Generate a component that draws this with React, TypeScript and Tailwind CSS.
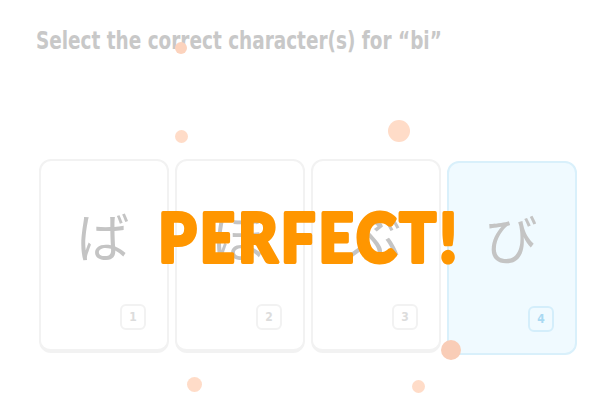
import React from "react";

const choices = [
  { kana: "ば", n: 1 },
  { kana: "ぼ", n: 2 },
  { kana: "ぶ", n: 3 },
  { kana: "び", n: 4, selected: true },
];

const dots = [
  { x: 181, y: 48, d: 12, c: "bg-[#fcd3bd]" },
  { x: 181, y: 136, d: 13, c: "bg-[#ffdcc8]" },
  { x: 399, y: 131, d: 22, c: "bg-[#ffdcc8]" },
  { x: 451, y: 350, d: 20, c: "bg-[#f9cdb7]" },
  { x: 194, y: 384, d: 15, c: "bg-[#ffdcc8]" },
  { x: 418, y: 386, d: 13, c: "bg-[#ffdcc8]" },
];

const App = () => {
  return (
    <div className="relative w-[606px] h-[419px] overflow-hidden bg-white">
      <div className="flex flex-col pt-[25px] pl-[39px]">
        <h1
          className="text-[25px] font-bold text-[#c8c8c8] -ml-[3px] leading-[32px] whitespace-nowrap origin-left scale-x-[0.82]"
          style={{ fontFamily: '"DejaVu Sans Condensed", "DejaVu Sans", sans-serif' }}
        >
          Select the correct character(s) for “bi”
        </h1>
        <div className="flex gap-[6px] mt-[102px]">
          {choices.map((c) => (
            <div
              key={c.n}
              className={
                c.selected
                  ? "w-[130px] h-[194px] mt-[2px] rounded-xl border-2 border-[#d9f0fb] bg-[#f0faff] flex flex-col pt-[19px] pl-[19px] pr-[21px] pb-[21px]"
                  : "w-[130px] h-[194px] rounded-xl border-2 border-b-4 border-[#f2f2f2] bg-white flex flex-col pt-[19px] pl-[19px] pr-[21px] pb-[19px]"
              }
            >
              <div className="flex-1 flex items-center justify-center pb-[14px]">
                <span
                  className="text-[53px] leading-none text-[#c4c4c4]"
                  style={{ fontFamily: '"Noto Sans CJK JP", sans-serif' }}
                >
                  {c.kana}
                </span>
              </div>
              <div className="flex justify-end">
                <div
                  className={
                    c.selected
                      ? "w-[26px] h-[26px] rounded-md border-2 border-[#d4eefb] flex items-center justify-center text-[12px] font-bold text-[#a9d9f2]"
                      : "w-[26px] h-[26px] rounded-md border-2 border-[#f2f2f2] flex items-center justify-center text-[12px] font-bold text-[#dcdcdc]"
                  }
                  style={{ fontFamily: '"DejaVu Sans Condensed", sans-serif' }}
                >
                  {c.n}
                </div>
              </div>
            </div>
          ))}
        </div>
      </div>

      {dots.map((d, i) => (
        <div
          key={i}
          className={`absolute rounded-full ${d.c}`}
          style={{ left: d.x - d.d / 2, top: d.y - d.d / 2, width: d.d, height: d.d }}
        />
      ))}

      <svg className="absolute left-[150px] top-[200px]" width="330" height="75">
        <text
          x="8.5"
          y="61.5"
          textLength="302"
          lengthAdjust="spacingAndGlyphs"
          letterSpacing="4"
          fontSize="66"
          fontWeight="900"
          fill="#ff9600"
          stroke="#ff9600"
          strokeWidth="4"
          strokeLinejoin="round"
          style={{ fontFamily: 'Lato, "Liberation Sans", sans-serif' }}
        >
          PERFECT!
        </text>
      </svg>
    </div>
  );
};

export default App;
